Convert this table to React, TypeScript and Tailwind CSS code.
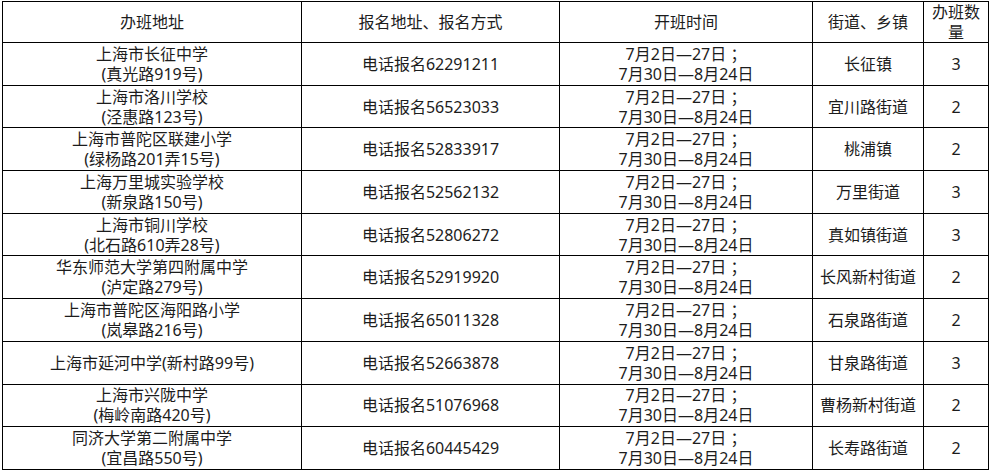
const rows = [
  { school: ["上海市长征中学", "(真光路919号)"], phone: "62291211", street: "长征镇", count: 3 },
  { school: ["上海市洛川学校", "(泾惠路123号)"], phone: "56523033", street: "宜川路街道", count: 2 },
  { school: ["上海市普陀区联建小学", "(绿杨路201弄15号)"], phone: "52833917", street: "桃浦镇", count: 2 },
  { school: ["上海万里城实验学校", "(新泉路150号)"], phone: "52562132", street: "万里街道", count: 3 },
  { school: ["上海市铜川学校", "(北石路610弄28号)"], phone: "52806272", street: "真如镇街道", count: 3 },
  { school: ["华东师范大学第四附属中学", "(泸定路279号)"], phone: "52919920", street: "长风新村街道", count: 2 },
  { school: ["上海市普陀区海阳路小学", "(岚皋路216号)"], phone: "65011328", street: "石泉路街道", count: 2 },
  { school: ["上海市延河中学(新村路99号)"], phone: "52663878", street: "甘泉路街道", count: 3 },
  { school: ["上海市兴陇中学", "(梅岭南路420号)"], phone: "51076968", street: "曹杨新村街道", count: 2 },
  { school: ["同济大学第二附属中学", "(宜昌路550号)"], phone: "60445429", street: "长寿路街道", count: 2 },
]

const cell = "border border-black p-0 text-center align-middle"

export default function App() {
  return (
    <div
      className="w-[991px] h-[470px] overflow-hidden bg-white pt-px pl-[2px] text-[16px] leading-[20px] text-[#1c1c1c]"
      style={{ fontFamily: '"Noto Sans", "Noto Sans CJK SC", sans-serif' }}
    >
      <table className="table-fixed border-collapse w-[986px]">
        <colgroup>
          <col className="w-[299px]" />
          <col className="w-[258px]" />
          <col className="w-[253px]" />
          <col className="w-[111px]" />
          <col className="w-[65px]" />
        </colgroup>
        <thead>
          <tr className="h-[38px]">
            <th className={`${cell} font-normal`}>办班地址</th>
            <th className={`${cell} font-normal`}>报名地址、报名方式</th>
            <th className={`${cell} font-normal`}>开班时间</th>
            <th className={`${cell} font-normal`}>街道、乡镇</th>
            <th className={`${cell} font-normal`}>
              <div>办班数</div>
              <div>量</div>
            </th>
          </tr>
        </thead>
        <tbody>
          {rows.map((r, i) => (
            <tr key={i} className="h-[42.7px]">
              <td className={cell}>
                {r.school.map((line, j) => (
                  <div key={j}>{line}</div>
                ))}
              </td>
              <td className={cell}>电话报名{r.phone}</td>
              <td className={cell}>
                <div>7月2日—27日 ；</div>
                <div>7月30日—8月24日</div>
              </td>
              <td className={cell}>{r.street}</td>
              <td className={cell}>{r.count}</td>
            </tr>
          ))}
        </tbody>
      </table>
    </div>
  )
}
